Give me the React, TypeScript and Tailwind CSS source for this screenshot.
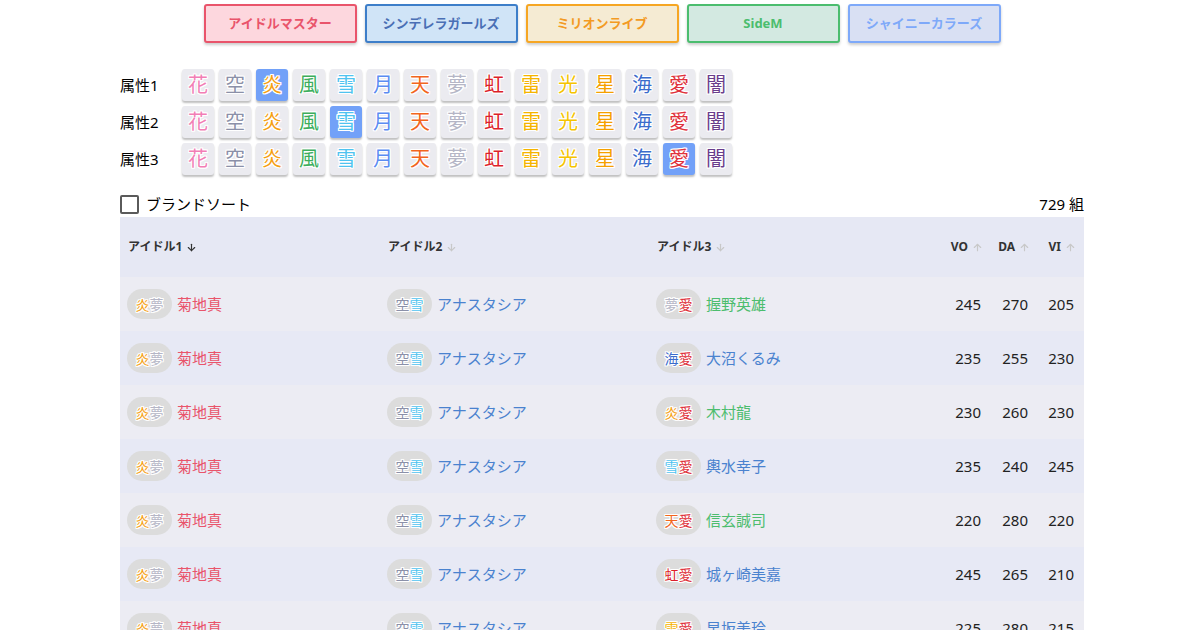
import { ArrowDown, ArrowUp } from "lucide-react";

const BRANDS = [
  { label: "アイドルマスター", cls: "border-[#e9546b] bg-[#fdd7de] text-[#e9546b]" },
  { label: "シンデレラガールズ", cls: "border-[#3d7ec9] bg-[#d0e4f7] text-[#4a6fb5]" },
  { label: "ミリオンライブ", cls: "border-[#f6a623] bg-[#f5ebd3] text-[#f39a22]" },
  { label: "SideM", cls: "border-[#4bbd6e] bg-[#d3e9e1] text-[#4bbd6e]" },
  { label: "シャイニーカラーズ", cls: "border-[#7ea9f9] bg-[#d9e0f3] text-[#7ea9f9]" },
];

const ATTRS: Record<string, string> = {
  花: "#f27eb5",
  空: "#8b90a8",
  炎: "#f5a012",
  風: "#3cae5c",
  雪: "#4fc3f0",
  月: "#5b8cf2",
  天: "#f2661e",
  夢: "#b5b6c6",
  虹: "#dd1f2a",
  雷: "#f5b400",
  光: "#f5c400",
  星: "#f5a000",
  海: "#3b6ccc",
  愛: "#e0323c",
  闇: "#6a3d8c",
};
const ATTR_KEYS = Object.keys(ATTRS);

const outline =
  "[text-shadow:1px_0_0_#fff,-1px_0_0_#fff,0_1px_0_#fff,0_-1px_0_#fff,1px_1px_0_#fff,-1px_-1px_0_#fff,1px_-1px_0_#fff,-1px_1px_0_#fff]";

const PINK = "#e9546b";
const BLUE = "#4a82cf";
const GREEN = "#4cbd6e";

type Idol = [string, string, string, string];

const ROWS: { idols: Idol[]; vo: number; da: number; vi: number }[] = [
  { idols: [["炎", "夢", "菊地真", PINK], ["空", "雪", "アナスタシア", BLUE], ["夢", "愛", "握野英雄", GREEN]], vo: 245, da: 270, vi: 205 },
  { idols: [["炎", "夢", "菊地真", PINK], ["空", "雪", "アナスタシア", BLUE], ["海", "愛", "大沼くるみ", BLUE]], vo: 235, da: 255, vi: 230 },
  { idols: [["炎", "夢", "菊地真", PINK], ["空", "雪", "アナスタシア", BLUE], ["炎", "愛", "木村龍", GREEN]], vo: 230, da: 260, vi: 230 },
  { idols: [["炎", "夢", "菊地真", PINK], ["空", "雪", "アナスタシア", BLUE], ["雪", "愛", "輿水幸子", BLUE]], vo: 235, da: 240, vi: 245 },
  { idols: [["炎", "夢", "菊地真", PINK], ["空", "雪", "アナスタシア", BLUE], ["天", "愛", "信玄誠司", GREEN]], vo: 220, da: 280, vi: 220 },
  { idols: [["炎", "夢", "菊地真", PINK], ["空", "雪", "アナスタシア", BLUE], ["虹", "愛", "城ヶ崎美嘉", BLUE]], vo: 245, da: 265, vi: 210 },
  { idols: [["炎", "夢", "菊地真", PINK], ["空", "雪", "アナスタシア", BLUE], ["雷", "愛", "早坂美玲", BLUE]], vo: 225, da: 280, vi: 215 },
  { idols: [["炎", "夢", "菊地真", PINK], ["空", "雪", "アナスタシア", BLUE], ["光", "愛", "喜多見柚", BLUE]], vo: 230, da: 250, vi: 240 },
];

const SELECTED = ["炎", "雪", "愛"];

function IdolCell({ idol }: { idol: Idol }) {
  const [a, b, name, color] = idol;
  return (
    <div className="flex items-center pl-[7px]">
      <span className="flex h-[30px] w-[45px] items-center justify-center rounded-full bg-[#dcdcdc] text-[14px]">
        <span className={outline} style={{ color: ATTRS[a] }}>{a}</span>
        <span className={outline} style={{ color: ATTRS[b] }}>{b}</span>
      </span>
      <span className="ml-[5px] text-[15px]" style={{ color }}>
        {name}
      </span>
    </div>
  );
}

export default function App() {
  return (
    <div className="h-[630px] overflow-hidden bg-white font-['Noto_Sans','Noto_Sans_CJK_JP',sans-serif] text-[#222]">
      <div className="ml-[120px] w-[964px]">
        <div className="flex justify-center gap-2 pt-1">
          {BRANDS.map((b) => (
            <button
              key={b.label}
              className={`h-[39px] w-[153px] rounded-[3px] border-2 text-[13px] font-bold shadow-[0_2px_3px_rgba(0,0,0,0.2)] ${b.cls}`}
            >
              {b.label}
            </button>
          ))}
        </div>

        <div className="mt-[26px] flex flex-col gap-[5px]">
          {SELECTED.map((sel, i) => (
            <div key={i} className="flex items-center">
              <div className="w-[62px] text-[15px] text-black">属性{i + 1}</div>
              <div className="flex gap-[5px]">
                {ATTR_KEYS.map((k) => (
                  <div
                    key={k}
                    className={`flex h-[32px] w-[32px] items-center justify-center rounded-[3px] text-[20px] shadow-[0_2px_2px_rgba(0,0,0,0.25)] ${outline} ${
                      k === sel ? "bg-[#72a1f8]" : "bg-[#ebebf0]"
                    }`}
                    style={{ color: ATTRS[k] }}
                  >
                    {k}
                  </div>
                ))}
              </div>
            </div>
          ))}
        </div>

        <div className="mt-[19px] flex h-[21px] items-center justify-between">
          <label className="flex items-center">
            <span className="h-[19px] w-[19px] rounded-[2px] border-2 border-[#5a5a5a]" />
            <span className="ml-[7px] text-[15px] text-black">ブランドソート</span>
          </label>
          <span className="text-[15px] text-black">729 組</span>
        </div>

        <div className="mt-[2px]">
          <div className="grid h-[60px] grid-cols-[260px_269px_1fr_47px_47px_46px] items-center bg-[#e6e8f4] text-[12px] font-bold text-[#333]">
            <div className="flex items-center gap-1 pl-2">
              アイドル1 <ArrowDown size={11} strokeWidth={2.5} className="text-[#333]" />
            </div>
            <div className="flex items-center gap-1 pl-2">
              アイドル2 <ArrowDown size={11} strokeWidth={2.5} className="text-[#c8c8c8]" />
            </div>
            <div className="flex items-center gap-1 pl-2">
              アイドル3 <ArrowDown size={11} strokeWidth={2.5} className="text-[#c8c8c8]" />
            </div>
            {["VO", "DA", "VI"].map((h) => (
              <div key={h} className="flex items-center justify-end gap-1 pr-2">
                {h} <ArrowUp size={11} strokeWidth={2.5} className="text-[#c8c8c8]" />
              </div>
            ))}
          </div>

          {ROWS.map((r, i) => (
            <div
              key={i}
              className={`grid h-[54px] grid-cols-[260px_269px_1fr_47px_47px_46px] items-center ${
                i % 2 === 0 ? "bg-[#ececf3]" : "bg-[#e7e9f5]"
              }`}
            >
              {r.idols.map((idol, j) => (
                <IdolCell key={j} idol={idol} />
              ))}
              <div className="pr-[10px] text-right text-[15px]">{r.vo}</div>
              <div className="pr-[10px] text-right text-[15px]">{r.da}</div>
              <div className="pr-[10px] text-right text-[15px]">{r.vi}</div>
            </div>
          ))}
        </div>
      </div>
    </div>
  );
}
